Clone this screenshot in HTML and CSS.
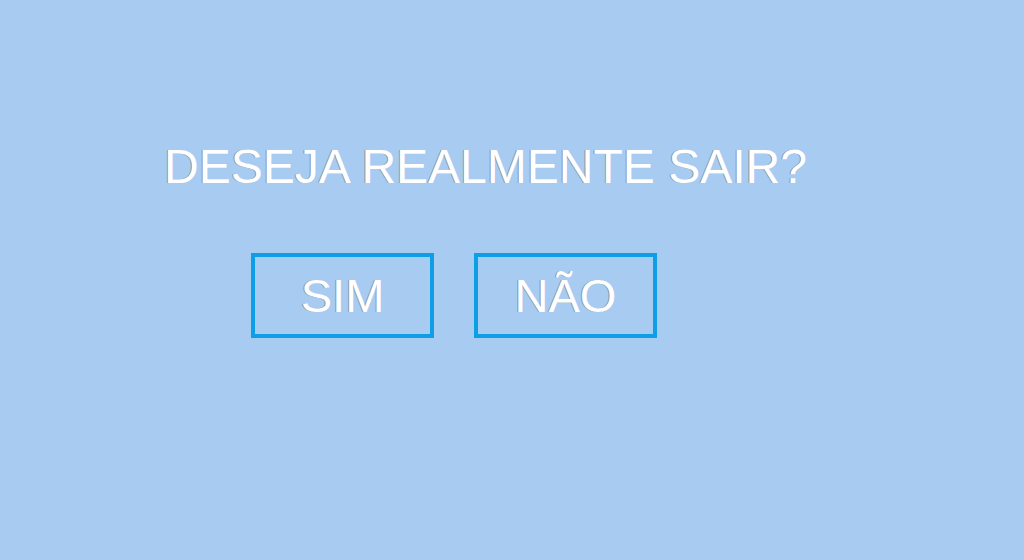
FILE: index.html
```html
<!DOCTYPE html>
<html lang="pt">
<head>
<meta charset="utf-8">
<title>Sair</title>
<link rel="stylesheet" href="styles.css">
</head>
<body>
<main class="dialog">
  <h1 class="question">DESEJA REALMENTE SAIR?</h1>
  <div class="actions">
    <button class="choice">SIM</button>
    <button class="choice">NÃO</button>
  </div>
</main>
</body>
</html>
```

FILE: styles.css
```css
html, body {
  margin: 0;
  height: 100%;
}
body {
  background: #a8cbf2;
  font-family: "Liberation Sans", Arial, sans-serif;
  color: #ffffff;
}
.dialog {
  display: flex;
  flex-direction: column;
  padding-top: 143px;
}
.question {
  margin: 0 0 0 164px;
  font-size: 48px;
  font-weight: normal;
  line-height: 48px;
  text-shadow: -1px 0 0 rgba(70, 40, 10, 0.35);
}
.actions {
  display: flex;
  gap: 40px;
  margin: 62px 0 0 251px;
}
.choice {
  width: 183px;
  height: 85px;
  box-sizing: border-box;
  border: 4px solid #0c9fe6;
  background: transparent;
  color: #ffffff;
  font-family: "Liberation Sans", Arial, sans-serif;
  font-size: 47px;
  display: flex;
  align-items: center;
  justify-content: center;
  padding: 0;
  text-shadow: -1px 0 0 rgba(70, 40, 10, 0.35);
}
```
